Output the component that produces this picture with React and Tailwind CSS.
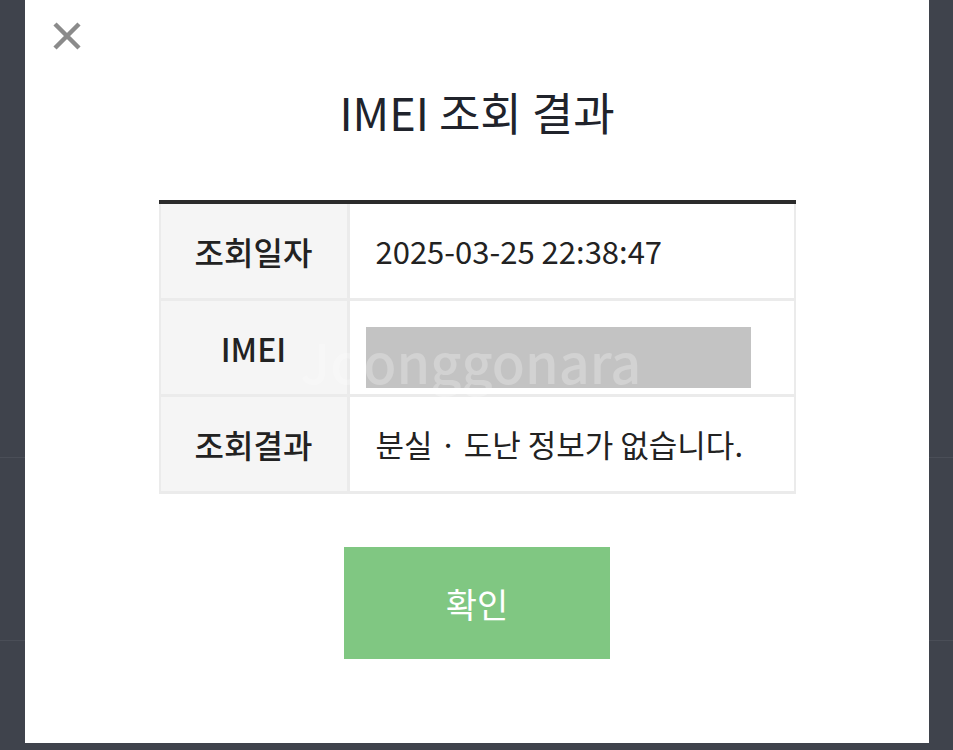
import React from "react";

const rows = [
  { label: "조회일자", value: "2025-03-25 22:38:47", h: "h-[97px]" },
  { label: "IMEI", value: null, h: "h-[96px]" },
  { label: "조회결과", value: "분실 · 도난 정보가 없습니다.", h: "h-[97px]" },
];

const App = () => {
  return (
    <div
      className="relative w-full h-[750px] overflow-hidden bg-[#3f434c]"
      style={{ fontFamily: '"Noto Sans CJK KR", "Noto Sans", sans-serif' }}
    >
      {/* page behind the modal */}
      <div className="flex flex-col">
        <div className="h-[458px] border-b border-[#4a4e57]" />
        <div className="h-[183px] border-b border-[#4a4e57]" />
      </div>

      {/* modal */}
      <div className="absolute left-[25px] top-0 w-[904px] h-[743px] bg-white flex flex-col items-center">
        <button className="absolute left-[27px] top-[21px] w-[30px] h-[30px] flex items-center justify-center">
          <svg width="28" height="28" viewBox="0 0 28 28">
            <path d="M2 2 L26 26 M26 2 L2 26" stroke="#8b8b8b" strokeWidth="4.5" strokeLinecap="butt" />
          </svg>
        </button>

        <h1 className="mt-[83px] text-[45px] leading-[58px] font-normal text-[#20232b]">
          IMEI 조회 결과
        </h1>

        <div className="relative mt-[59px] w-[637px] border-t-4 border-[#2b2b2b]">
          {rows.map((row, index) => (
            <div
              key={index}
              className={`flex ${row.h} border-x-2 border-b-[3px] border-[#ebebeb]`}
            >
              <div className="w-[189px] shrink-0 flex items-center justify-center bg-[#f5f5f5] border-r-[3px] border-[#ebebeb] text-[32px] font-medium text-[#222]">
                {row.label}
              </div>
              {row.value ? (
                <div className="flex-1 flex items-center pl-[26px] text-[31px] text-[#222]">
                  {row.value}
                </div>
              ) : (
                <div className="flex-1 flex items-start pl-[16px]">
                  <div className="mt-[26px] w-[385px] h-[61px] bg-[#c3c3c3]" />
                </div>
              )}
            </div>
          ))}
          {/* watermark */}
          <div className="absolute left-[142px] top-[130px] text-[54px] font-medium leading-none text-white/25 pointer-events-none select-none">
            Joonggonara
          </div>
        </div>

        <button className="mt-[53px] w-[266px] h-[112px] bg-[#80c782] text-white text-[34px] flex items-center justify-center">
          확인
        </button>
      </div>
    </div>
  );
};

export default App;
